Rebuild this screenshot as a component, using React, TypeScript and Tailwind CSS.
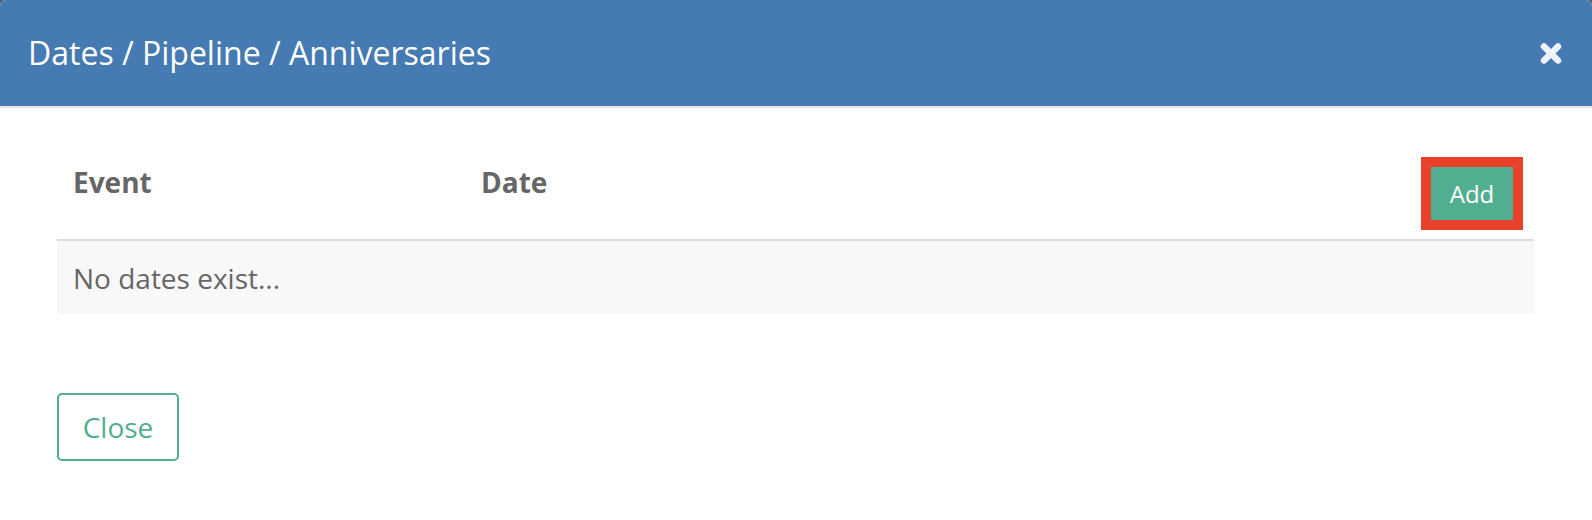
import React from 'react';

const CloseIcon: React.FC = () => (
  <svg width="22" height="23" viewBox="0 0 22 23" className="block">
    <path d="M4 4.5 L18 18.5 M18 4.5 L4 18.5" stroke="#eef3f9" strokeWidth="6.5" strokeLinecap="round" fill="none" />
  </svg>
);

const App: React.FC = () => {
  return (
    <div
      className="w-[1592px] h-[520px] bg-[#5a5a5a] overflow-hidden"
      style={{ fontFamily: '"Open Sans", "Liberation Sans", sans-serif' }}
    >
      <div className="w-full h-full bg-white rounded-t-[6px] overflow-hidden">
        {/* Modal header */}
        <div className="h-[108px] bg-[#457ab2] border-b-2 border-[#e4e4e4] flex items-center justify-between pl-[28px] pr-[30px]">
          <h2 className="text-[32px] leading-[40px] text-white font-normal">Dates / Pipeline / Anniversaries</h2>
          <CloseIcon />
        </div>

        {/* Modal body */}
        <div className="pl-[57px] pr-[58px]">
          <div className="mt-[39px]">
            {/* Table head */}
            <div className="h-[94px] flex items-start border-b-2 border-[#dddddd]">
              <div className="w-[408px] pl-[16px] pt-[16px] text-[28px] leading-[38px] font-bold text-[#666666]">Event</div>
              <div className="pl-[16px] pt-[16px] text-[28px] leading-[38px] font-bold text-[#666666]">Date</div>
              <button className="ml-auto mr-[11px] mt-[10px] w-[102px] h-[73px] border-[10px] border-[#e9412a] bg-[#52ae90] text-white text-[24px] flex items-center justify-center">
                Add
              </button>
            </div>
            {/* Empty row */}
            <div className="h-[73px] bg-[#f8f8f8] flex items-center pl-[16px] text-[28px] text-[#666666]">
              No dates exist...
            </div>
          </div>

          <button className="mt-[79px] w-[122px] h-[68px] border-2 border-[#52ae90] rounded-[5px] text-[28px] text-[#52ae90] flex items-center justify-center">
            Close
          </button>
        </div>
      </div>
    </div>
  );
};

export default App;
